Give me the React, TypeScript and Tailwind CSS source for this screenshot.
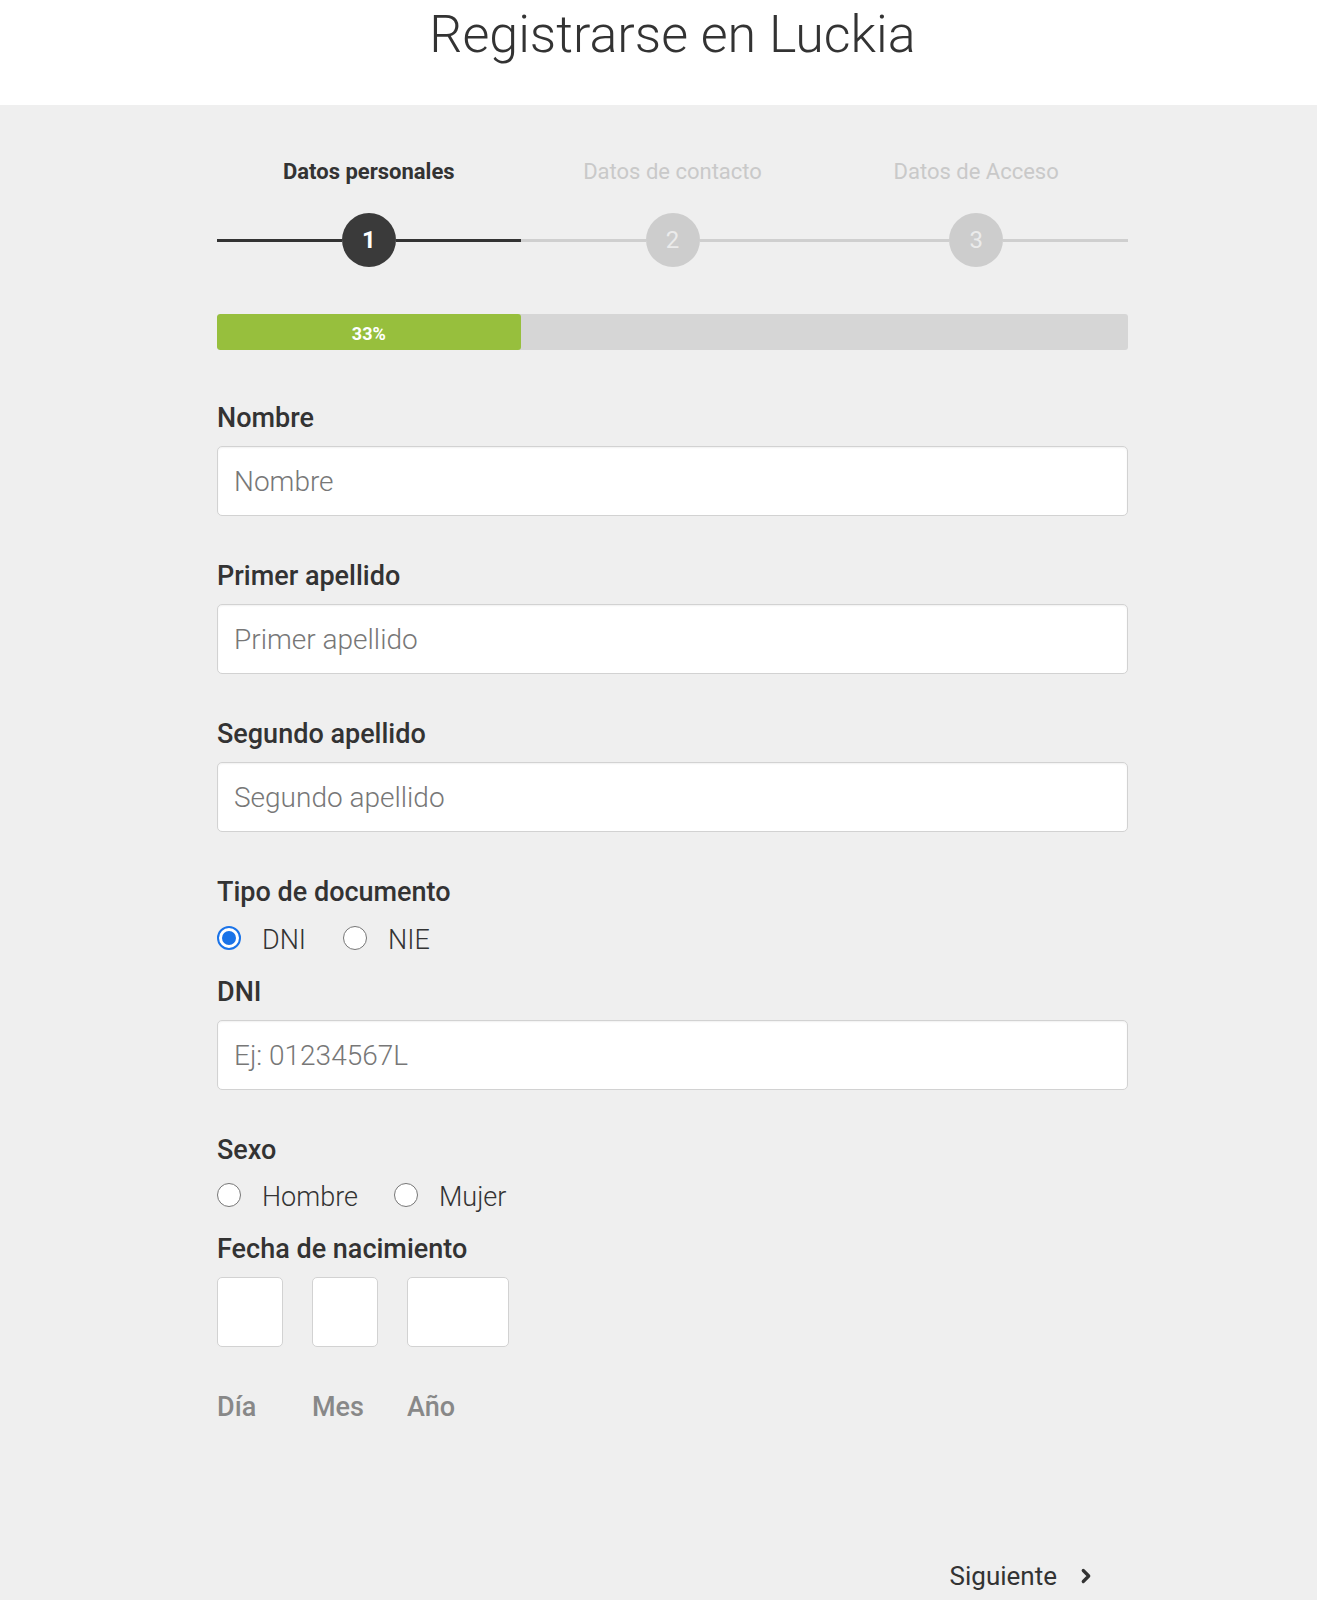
import { ChevronRight } from "lucide-react";

const steps = [
  { n: 1, label: "Datos personales", active: true },
  { n: 2, label: "Datos de contacto", active: false },
  { n: 3, label: "Datos de Acceso", active: false },
];

function Field({ label, placeholder, top }: { label: string; placeholder: string; top: string }) {
  return (
    <div className={top}>
      <label className="block text-[27px] leading-[36px] font-medium text-[#333]">{label}</label>
      <input
        type="text"
        placeholder={placeholder}
        className="mt-[10px] block w-full h-[70px] bg-white border border-[#d2d2d2] rounded-[5px] shadow-[inset_0_1px_2px_rgba(0,0,0,0.06)] pl-[16px] text-[28px] font-light text-[#333] placeholder:text-[#777] outline-none"
      />
    </div>
  );
}

function Radio({ checked, label }: { checked?: boolean; label: string }) {
  return (
    <label className="flex items-center gap-[21px]">
      {checked ? (
        <span className="w-[24px] h-[24px] rounded-full border-2 border-[#1a73e8] bg-white flex items-center justify-center -mt-[4px]">
          <span className="w-[14px] h-[14px] rounded-full bg-[#1a73e8]" />
        </span>
      ) : (
        <span className="w-[24px] h-[24px] rounded-full border border-[#767676] bg-white -mt-[4px]" />
      )}
      <span className="text-[27px] leading-[36px] font-light text-[#333]">{label}</span>
    </label>
  );
}

export default function App() {
  return (
    <div className="min-h-[1600px] bg-[#efefef] font-['Roboto',sans-serif]">
      {/* Header */}
      <header className="h-[105px] bg-white">
        <h1 className="ml-[217px] w-[911px] text-center pt-[9px] text-[52px] leading-none font-light text-[#333]">
          Registrarse en Luckia
        </h1>
      </header>

      <main className="ml-[217px] w-[911px] pb-[10px]">
        {/* Stepper */}
        <div className="grid grid-cols-3 pt-[53px]">
          {steps.map((s) => (
            <div key={s.n} className="flex flex-col">
              <div
                className={
                  "text-center text-[22px] leading-[28px] " +
                  (s.active ? "font-bold text-[#333]" : "text-[#c9c9c9]")
                }
              >
                {s.label}
              </div>
              <div className="mt-[27px] h-[54px] flex items-center">
                <div className={"flex-1 h-[3px] " + (s.active ? "bg-[#333]" : "bg-[#cfcfcf]")} />
                <div
                  className={
                    "w-[54px] h-[54px] rounded-full flex items-center justify-center text-[24px] " +
                    (s.active ? "bg-[#3a3a3a] text-white font-bold" : "bg-[#cdcdcd] text-[#ebebeb]")
                  }
                >
                  {s.n}
                </div>
                <div className={"flex-1 h-[3px] " + (s.active ? "bg-[#333]" : "bg-[#cfcfcf]")} />
              </div>
            </div>
          ))}
        </div>

        {/* Progress */}
        <div className="mt-[47px] h-[36px] bg-[#d6d6d6] rounded-[3px] flex overflow-hidden">
          <div className="w-1/3 bg-[#97bf3d] rounded-[3px] flex items-center justify-center pt-[3px] text-white font-bold text-[18px]">
            33%
          </div>
        </div>

        <Field label="Nombre" placeholder="Nombre" top="mt-[50px]" />
        <Field label="Primer apellido" placeholder="Primer apellido" top="mt-[42px]" />
        <Field label="Segundo apellido" placeholder="Segundo apellido" top="mt-[42px]" />

        {/* Tipo de documento */}
        <div className="mt-[42px]">
          <div className="text-[27px] leading-[36px] font-medium text-[#333]">Tipo de documento</div>
          <div className="mt-[12px] flex items-center gap-[37px]">
            <Radio checked label="DNI" />
            <Radio label="NIE" />
          </div>
        </div>

        <Field label="DNI" placeholder="Ej: 01234567L" top="mt-[16px]" />

        {/* Sexo */}
        <div className="mt-[42px]">
          <div className="text-[27px] leading-[36px] font-medium text-[#333]">Sexo</div>
          <div className="mt-[11px] flex items-center gap-[36px]">
            <Radio label="Hombre" />
            <Radio label="Mujer" />
          </div>
        </div>

        {/* Fecha de nacimiento */}
        <div className="mt-[16px]">
          <div className="text-[27px] leading-[36px] font-medium text-[#333]">Fecha de nacimiento</div>
          <div className="mt-[10px] flex gap-[29px]">
            {[
              { w: "w-[66px]", t: "Día" },
              { w: "w-[66px]", t: "Mes" },
              { w: "w-[102px]", t: "Año" },
            ].map((d) => (
              <div key={d.t} className="flex flex-col">
                <input
                  type="text"
                  className={d.w + " h-[70px] bg-white border border-[#d2d2d2] rounded-[5px] outline-none"}
                />
                <span className="mt-[42px] text-[27px] leading-[36px] font-medium text-[#888]">{d.t}</span>
              </div>
            ))}
          </div>
        </div>

        {/* Siguiente */}
        <div className="mt-[133px] flex justify-end pr-[31px]">
          <button className="flex items-center gap-[18px] text-[26px] leading-[36px] text-[#333]">
            Siguiente
            <ChevronRight size={22} strokeWidth={3.5} className="text-[#333]" />
          </button>
        </div>
      </main>
    </div>
  );
}
